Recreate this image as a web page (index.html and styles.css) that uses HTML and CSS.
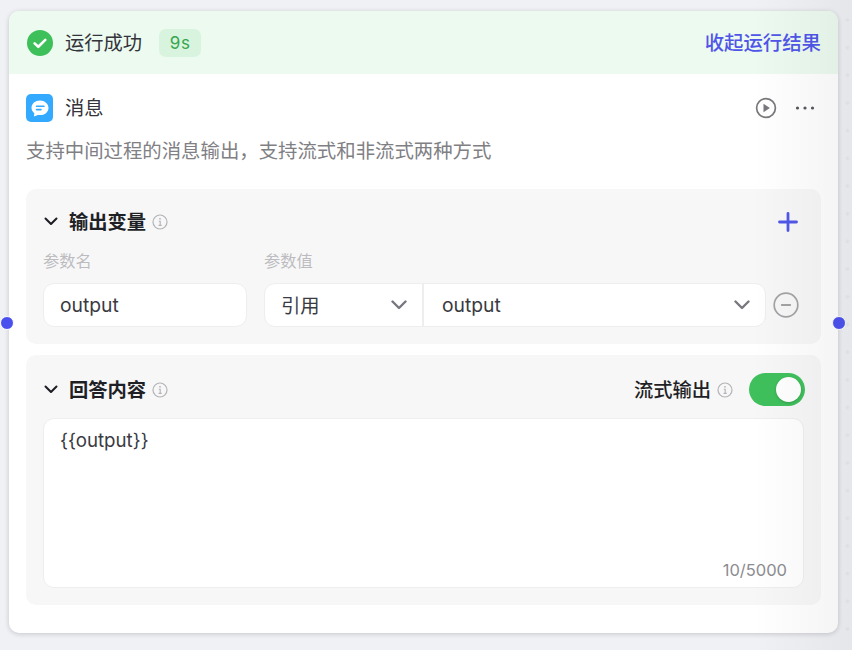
FILE: index.html
```html
<!DOCTYPE html>
<html lang="zh">
<head>
<meta charset="utf-8">
<title>消息</title>
<link rel="stylesheet" href="styles.css">
</head>
<body>
<main class="canvas">
  <article class="node">
    <header class="run-bar">
      <svg class="run-icon" viewBox="0 0 26 26"><circle cx="13" cy="13" r="13" fill="#3dbf5a"/><path d="M7.6 13.4l3.7 3.4 7-6.9" fill="none" stroke="#fff" stroke-width="2.6" stroke-linecap="round" stroke-linejoin="round"/></svg>
      <span class="run-text">运行成功</span>
      <span class="run-time">9s</span>
      <a class="run-toggle">收起运行结果</a>
    </header>
    <div class="node-body">
      <div class="title-row">
        <span class="msg-icon"><svg viewBox="0 0 28 28" width="28" height="28"><path d="M14 6.5c-4.7 0-8.5 3.2-8.5 7.3 0 2.2 1.1 4.1 2.8 5.4l-.3 2.6c0 .5.4.7.8.5l3-1.4c.7.1 1.4.2 2.2.2 4.7 0 8.5-3.1 8.500-7.200S18.700 6.500 14 6.500z" fill="#fff"/><path d="M10.500 12.200h7.500M10.500 15.600h4.500" stroke="#33aaff" stroke-width="1.600" stroke-linecap="round"/></svg></span>
        <span class="node-name">消息</span>
        <span class="title-actions">
          <svg class="play" viewBox="0 0 22 22"><circle cx="11" cy="11" r="9.400" fill="none" stroke="#77777c" stroke-width="1.700"/><path d="M8.500 6.800v8.400l6.400-4.200z" fill="#77777c"/></svg>
          <svg class="more" viewBox="0 0 20 4"><circle cx="2.500" cy="2" r="1.600"/><circle cx="10" cy="2" r="1.600"/><circle cx="17.500" cy="2" r="1.600"/></svg>
        </span>
      </div>
      <p class="desc">支持中间过程的消息输出，支持流式和非流式两种方式</p>

      <section class="panel panel-output">
        <div class="panel-head">
          <svg class="chev" viewBox="0 0 14 9"><path d="M1.500 1.500L7 7l5.500-5.500" fill="none" stroke="#1c1c23" stroke-width="2" stroke-linecap="round" stroke-linejoin="round"/></svg>
          <h2 class="panel-title">输出变量</h2>
          <svg class="info" viewBox="0 0 16 16"><circle cx="8" cy="8" r="7" fill="none" stroke="#b3b3b8" stroke-width="1.200"/><circle cx="8" cy="4.800" r=".9" fill="#b3b3b8"/><path d="M6.800 7.200H8.200V11.300M6.600 11.400h3.100" fill="none" stroke="#b3b3b8" stroke-width="1.100"/></svg>
          <svg class="plus" viewBox="0 0 20 20"><path d="M10 1.500v17M1.500 10h17" stroke="#4f55e8" stroke-width="2.800" stroke-linecap="round"/></svg>
        </div>
        <div class="fields">
          <div class="field-name">
            <div class="label">参数名</div>
            <div class="input">output</div>
          </div>
          <div class="field-value">
            <div class="label">参数值</div>
            <div class="value-row">
              <div class="value-group">
                <div class="select-kind"><span>引用</span><svg class="sel-chev" viewBox="0 0 16 10"><path d="M1.500 1.500L8 8l6.500-6.500" fill="none" stroke="#77777f" stroke-width="2.400" stroke-linecap="round" stroke-linejoin="round"/></svg></div>
                <div class="select-var"><span>output</span><svg class="sel-chev" viewBox="0 0 16 10"><path d="M1.500 1.500L8 8l6.500-6.500" fill="none" stroke="#77777f" stroke-width="2.400" stroke-linecap="round" stroke-linejoin="round"/></svg></div>
              </div>
              <svg class="minus" viewBox="0 0 26 26"><circle cx="13" cy="13" r="11.800" fill="none" stroke="#a3a3a6" stroke-width="1.700"/><path d="M8.800 13h8.400" stroke="#a3a3a6" stroke-width="1.900" stroke-linecap="round"/></svg>
            </div>
          </div>
        </div>
      </section>

      <section class="panel panel-answer">
        <div class="panel-head answer-head">
          <svg class="chev" viewBox="0 0 14 9"><path d="M1.500 1.500L7 7l5.500-5.500" fill="none" stroke="#1c1c23" stroke-width="2" stroke-linecap="round" stroke-linejoin="round"/></svg>
          <h2 class="panel-title">回答内容</h2>
          <svg class="info" viewBox="0 0 16 16"><circle cx="8" cy="8" r="7" fill="none" stroke="#b3b3b8" stroke-width="1.200"/><circle cx="8" cy="4.800" r=".9" fill="#b3b3b8"/><path d="M6.800 7.200H8.200V11.300M6.600 11.400h3.100" fill="none" stroke="#b3b3b8" stroke-width="1.100"/></svg>
          <span class="stream">
            <span class="stream-label">流式输出</span>
            <svg class="info" viewBox="0 0 16 16"><circle cx="8" cy="8" r="7" fill="none" stroke="#b3b3b8" stroke-width="1.200"/><circle cx="8" cy="4.800" r=".9" fill="#b3b3b8"/><path d="M6.800 7.200H8.200V11.300M6.600 11.400h3.100" fill="none" stroke="#b3b3b8" stroke-width="1.100"/></svg>
            <span class="switch"><span class="knob"></span></span>
          </span>
        </div>
        <div class="textarea">
          <div class="textarea-text">{{output}}</div>
          <div class="counter">10/5000</div>
        </div>
      </section>
    </div>
  </article>
  <span class="handle handle-left"></span>
  <span class="handle handle-right"></span>
  <div class="edge-shade"></div>
</main>
</body>
</html>
```

FILE: styles.css
```css
* { box-sizing: border-box; }
html, body { margin: 0; height: 100%; }
body {
  overflow: hidden;
  background-color: #f0f1f4;
  font-family: Inter, "Noto Sans CJK SC", sans-serif;
  color: #33333a;
}
.canvas {
  position: relative;
  width: 852px;
  height: 650px;
  padding: 11px 14px 0 9px;
  background-image: radial-gradient(circle, #e8e9ed 1.500px, transparent 2px);
  background-size: 27.700px 27.700px;
  background-position: 3px 6px;
}
.node {
  width: 829px;
  height: 622px;
  background: #fff;
  border-radius: 10px;
  overflow: hidden;
  box-shadow: 0 1px 5px rgba(30, 30, 50, .2);
}
.run-bar {
  display: flex;
  align-items: center;
  height: 63px;
  padding: 0 17px 0 18px;
  background: #ecfaef;
}
.run-icon { width: 26px; height: 26px; flex: none; }
.run-text { margin-left: 12px; font-size: 19.300px; line-height: 28px; color: #33333b; }
.run-time {
  margin-left: 17px;
  width: 42px;
  height: 28px;
  border-radius: 7px;
  background: #d8f3de;
  color: #37a64f;
  font-size: 17px;
  line-height: 28px;
  text-align: center;
  letter-spacing: .5px;
}
.run-toggle {
  margin-left: auto;
  color: #4f55e8;
  font-size: 19.400px;
  font-weight: 500;
  line-height: 28px;
}
.node-body { padding: 20px 17px 0; }
.title-row { display: flex; align-items: center; height: 28px; }
.msg-icon {
  display: block;
  width: 27px;
  height: 28px;
  border-radius: 5px;
  background: #33aaff;
  overflow: hidden;
  flex: none;
}
.msg-icon svg { display: block; margin-left: -.5px; }
.node-name { margin-left: 12px; font-size: 19.300px; line-height: 28px; color: #33333b; }
.title-actions { margin-left: auto; margin-right: 6px; display: flex; align-items: center; gap: 18px; }
.play { width: 22px; height: 22px; display: block; }
.more { width: 20px; height: 4px; display: block; fill: #55555a; }
.desc {
  margin: 15px 0 0;
  font-size: 19.400px;
  line-height: 28px;
  color: #808084;
}
.panel {
  background: #f7f7f8;
  border-radius: 10px;
  padding: 0 17px;
}
.panel-output { margin-top: 24px; height: 155px; padding-top: 16px; }
.panel-answer { margin-top: 11px; height: 250px; padding-top: 18px; }
.panel-head { display: flex; align-items: center; height: 33px; }
.chev { width: 14px; height: 9px; flex: none; margin-left: 1px; }
.panel-title {
  margin: 0 0 0 11px;
  font-size: 19.300px;
  font-weight: 700;
  line-height: 28px;
  color: #1f1f26;
}
.info { width: 16px; height: 16px; flex: none; margin-left: 6px; }
.plus { width: 20px; height: 20px; margin-left: auto; margin-right: 6px; flex: none; }
.fields { display: flex; gap: 17px; margin-top: 12px; }
.label { font-size: 16.300px; line-height: 22px; color: #bcbcc0; }
.field-name { width: 204px; flex: none; }
.field-value { flex: 1; }
.input, .value-group {
  height: 44px;
  background: #fff;
  border: 1px solid #eeeef0;
  border-radius: 11px;
}
.input, .value-row { margin-top: 11px; }
.input {
  padding: 0 16px;
  font-size: 19.300px;
  line-height: 42px;
  color: #3a3a42;
}
.value-row { display: flex; align-items: center; gap: 7px; }
.value-group { display: flex; width: 502px; overflow: hidden; flex: none; }
.select-kind, .select-var {
  display: flex;
  align-items: center;
  justify-content: space-between;
  height: 100%;
  font-size: 19.300px;
  color: #3a3a42;
}
.select-kind { width: 159px; padding: 0 15px 0 16px; border-right: 2px solid #eeeef0; flex: none; }
.select-var { flex: 1; padding: 0 15px 0 18px; }
.sel-chev { width: 16px; height: 10px; display: block; flex: none; }
.minus { width: 26px; height: 26px; flex: none; }
.answer-head .stream { margin-left: auto; margin-right: -1px; display: flex; align-items: center; }
.stream-label { margin-left: -1px; font-size: 19.300px; font-weight: 500; line-height: 28px; color: #1f1f26; }
.switch {
  display: block;
  position: relative;
  width: 56px;
  height: 33px;
  margin-left: 16px;
  border-radius: 17px;
  background: #3fc05c;
}
.knob {
  position: absolute;
  top: 4px;
  right: 4px;
  width: 25px;
  height: 25px;
  border-radius: 50%;
  background: #fff;
  box-shadow: 0 1px 3px rgba(0, 0, 0, .18);
}
.textarea {
  display: flex;
  flex-direction: column;
  justify-content: space-between;
  margin-top: 12px;
  height: 170px;
  padding: 9px 16px 6px 16px;
  background: #fff;
  border: 1px solid #eeeef0;
  border-radius: 11px;
}
.textarea-text { font-size: 18.700px; line-height: 26px; color: #3a3a42; }
.counter { align-self: flex-end; margin-right: 0; font-size: 16.500px; line-height: 22px; color: #8c8c90; }
.handle {
  position: absolute;
  top: 316px;
  width: 14px;
  height: 14px;
  border-radius: 50%;
  background: #4a50ee;
  border: 1.500px solid #fff;
}
.handle-left { left: 0; }
.handle-right { left: 832px; }
.edge-shade {
  position: absolute;
  top: 0;
  right: 0;
  bottom: 0;
  width: 100px;
  background: linear-gradient(90deg, rgba(60, 60, 70, 0), rgba(60, 60, 70, .06));
  pointer-events: none;
}
```
